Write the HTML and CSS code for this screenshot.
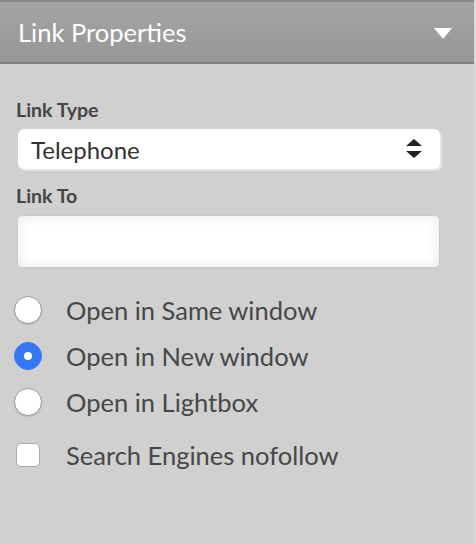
FILE: index.html
```html
<!DOCTYPE html>
<html>
<head>
<meta charset="utf-8">
<link rel="stylesheet" href="styles.css">
</head>
<body>
<div class="panel">
  <div class="header">
    <span class="title">Link Properties</span>
    <svg class="caret" width="18" height="11" viewBox="0 0 18 11"><path d="M0 0H18L9 11Z" fill="#fff"/></svg>
  </div>
  <div class="content">
    <div class="label">Link Type</div>
    <div class="select">
      <span class="select-text">Telephone</span>
      <svg class="arrows" width="16" height="20" viewBox="0 0 16 20"><path d="M8 0L16 7H0Z M0 12H16L8 19Z" fill="#222"/></svg>
    </div>
    <div class="label label2">Link To</div>
    <div class="input"></div>
    <div class="options">
      <div class="row"><span class="radio"></span><span class="opt">Open in Same window</span></div>
      <div class="row"><span class="radio checked"></span><span class="opt">Open in New window</span></div>
      <div class="row"><span class="radio"></span><span class="opt">Open in Lightbox</span></div>
      <div class="row check-row"><span class="check"></span><span class="opt">Search Engines nofollow</span></div>
    </div>
  </div>
</div>
</body>
</html>
```

FILE: styles.css
```css
html, body {
  margin: 0;
  padding: 0;
}
body {
  width: 476px;
  height: 544px;
  background: #d0d0d0;
  font-family: Lato, "Open Sans", sans-serif;
  overflow: hidden;
}
.panel {
  height: 544px;
  border-right: 2px solid #d9d9d9;
  box-sizing: border-box;
}
.header {
  height: 60px;
  border-top: 2px solid #888;
  border-bottom: 2px solid #7e7e7e;
  background: linear-gradient(#a4a4a4, #979797);
  display: flex;
  align-items: center;
  justify-content: space-between;
  padding: 0 22px 0 18px;
}
.title {
  color: #fff;
  font-size: 25.5px;
  line-height: 1;
  margin-top: 1px;
}
.caret {
  display: block;
  margin-top: 2px;
}
.content {
  padding: 35px 34px 0 16px;
}
.label {
  font-weight: bold;
  font-size: 19.5px;
  color: #454545;
  line-height: 22px;
}
.select {
  margin: 8px 0 0 2px;
  height: 40px;
  background: #fff;
  border-radius: 6px;
  box-shadow: 2px 2px 0 #e4e4e4;
  display: flex;
  align-items: center;
  justify-content: space-between;
  padding: 0 18px 0 13px;
}
.select-text {
  font-size: 24px;
  color: #333;
}
.arrows {
  display: block;
}
.label2 {
  margin-top: 16px;
}
.input {
  margin: 8px 0 0 1px;
  height: 51px;
  background: #fff;
  border: 1px solid #c9c9c9;
  border-radius: 5px;
  box-shadow: inset 0 0 14px rgba(0,0,0,0.09);
}
.options {
  margin-top: 19px;
  margin-left: -2px;
}
.row {
  display: flex;
  align-items: center;
  height: 46px;
}
.radio {
  box-sizing: border-box;
  width: 28px;
  height: 28px;
  border-radius: 50%;
  background: #fff;
  border: 1px solid #9a9a9a;
  box-shadow: 0 1px 1px rgba(0,0,0,0.12);
  flex: none;
  position: relative;
}
.radio.checked {
  background: #3478f6;
  border-color: #3478f6;
  box-shadow: none;
}
.radio.checked::after {
  content: "";
  position: absolute;
  left: 50%;
  top: 50%;
  width: 8px;
  height: 8px;
  margin: -4px 0 0 -4px;
  border-radius: 50%;
  background: #fff;
}
.check-row {
  margin-top: 7px;
}
.check {
  box-sizing: border-box;
  width: 24px;
  height: 24px;
  margin-left: 2px;
  margin-right: 2px;
  border-radius: 5px;
  background: #fff;
  border: 1px solid #a8a8a8;
  flex: none;
}
.opt {
  margin-left: 24px;
  font-size: 25.5px;
  color: #474747;
}
```
